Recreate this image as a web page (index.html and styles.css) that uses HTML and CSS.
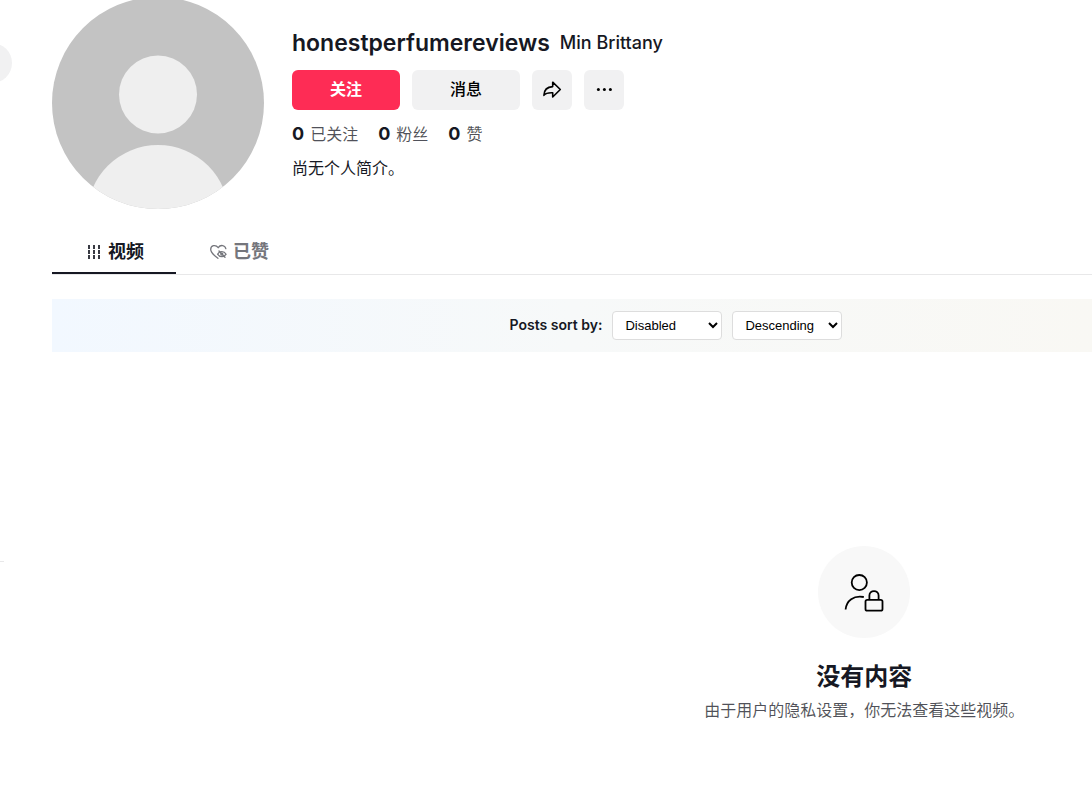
FILE: index.html
```
<!DOCTYPE html>
<html lang="zh-CN">

<head>
    <meta charset="UTF-8">
    <meta name="viewport" content="width=device-width, initial-scale=1.0">
    <title>honestperfumereviews</title>
    <link rel="stylesheet" href="styles.css">
</head>

<body>
    <div class="layout">
        <aside class="sidebar">
            <button class="sidebar-search" type="button" aria-label="搜索"></button>
            <hr class="sidebar-line">
        </aside>

        <main class="profile">
            <header class="profile-header">
                <svg class="avatar" viewBox="0 0 212 212" role="img" aria-label="头像">
                    <defs>
                        <clipPath id="avatarClip"><circle cx="106" cy="106" r="106" /></clipPath>
                    </defs>
                    <g clip-path="url(#avatarClip)">
                        <rect width="212" height="212" fill="#c3c3c3" />
                        <circle cx="106" cy="97.5" r="39" fill="#efefef" />
                        <circle cx="106" cy="219" r="71" fill="#efefef" />
                    </g>
                </svg>

                <div class="info">
                    <div class="names">
                        <h1 class="username">honestperfumereviews</h1>
                        <h2 class="nickname">Min Brittany</h2>
                    </div>
                    <div class="actions">
                        <button class="btn btn-follow" type="button">关注</button>
                        <button class="btn btn-message" type="button">消息</button>
                        <button class="btn btn-icon" type="button" aria-label="分享">
                            <svg width="20" height="20" viewBox="0 0 20 20" fill="none" stroke="#000" stroke-width="1.6" stroke-linejoin="round">
                                <path d="M10.7 2.2 L18.3 9.5 L10.7 17 V12.8 C6.7 12.6 4 12.8 1.9 15.3 C2.1 10 5.3 6.9 10.7 6.6 Z" />
                            </svg>
                        </button>
                        <button class="btn btn-icon" type="button" aria-label="更多">
                            <svg width="20" height="20" viewBox="0 0 20 20" fill="#000">
                                <circle cx="4.4" cy="9.6" r="1.5" />
                                <circle cx="10.4" cy="9.6" r="1.5" />
                                <circle cx="16.4" cy="9.6" r="1.5" />
                            </svg>
                        </button>
                    </div>
                    <div class="stats">
                        <div class="stat"><strong>0</strong><span>已关注</span></div>
                        <div class="stat"><strong>0</strong><span>粉丝</span></div>
                        <div class="stat"><strong>0</strong><span>赞</span></div>
                    </div>
                    <p class="bio">尚无个人简介。</p>
                </div>
            </header>

            <nav class="tabs">
                <a class="tab tab-active" href="#videos">
                    <svg width="16" height="16" viewBox="0 0 16 16" fill="none" stroke="#161823" stroke-width="2" opacity=".85">
                        <path d="M3 1 V5 M3 6 V10 M3 11 V15 M8 1 V5 M8 6 V10 M8 11 V15 M13 1 V5 M13 6 V10 M13 11 V15" />
                    </svg>
                    <span>视频</span>
                </a>
                <a class="tab" href="#liked">
                    <svg width="18" height="16" viewBox="0 0 18 16" fill="none" stroke="#75767c" stroke-width="1.3" stroke-linecap="round" stroke-linejoin="round">
                        <path d="M8.9 14.3 C5 11.5 1.7 8.8 1.7 5.3 C1.7 1.2 6.7 .2 9.2 3.7 C11.5 .3 16.1 1 16.8 4.7" />
                        <path d="M8.6 10.2 C10.5 6.7 15.1 6.7 17.1 10.2 C15.1 13.5 10.6 13.5 8.6 10.2 Z" />
                        <circle cx="12.8" cy="10.1" r="1" />
                        <path d="M10 7 L16 13.3" />
                    </svg>
                    <span>已赞</span>
                </a>
            </nav>

            <form class="sort-bar">
                <label class="sort-label" for="sortBy">Posts sort by:</label>
                <select class="sort-select" id="sortBy">
                    <option>Disabled</option>
                    <option>Views</option>
                    <option>Likes</option>
                </select>
                <select class="sort-select" id="sortOrder" aria-label="Sort order">
                    <option>Descending</option>
                    <option>Ascending</option>
                </select>
            </form>

            <section class="empty">
                <div class="empty-icon">
                    <svg width="44" height="44" viewBox="0 0 44 44" fill="none" stroke="#000" stroke-width="1.8" stroke-linejoin="round">
                        <circle cx="17.3" cy="12.6" r="7.6" />
                        <path d="M3.6 39.5 C4.5 30.5 11.5 25.2 21.8 27" />
                        <rect x="23.5" y="29.8" width="17" height="10.9" rx="1.8" />
                        <path d="M27.4 29.8 V25.6 C27.4 19.6 36.6 19.6 36.6 25.6 V29.8" />
                    </svg>
                </div>
                <h2 class="empty-title">没有内容</h2>
                <p class="empty-text">由于用户的隐私设置，你无法查看这些视频。</p>
            </section>
        </main>
    </div>
</body>

</html>
```
FILE: styles.css
```
* {
    box-sizing: border-box;
}

body {
    margin: 0;
    overflow-x: hidden;
    background: #fff;
    color: #161823;
    font-family: Inter, "Noto Sans CJK SC", sans-serif;
}

h1,
h2,
p {
    margin: 0;
}

.layout {
    display: flex;
}

/* Collapsed sidebar, only its right edge is visible */
.sidebar {
    flex: 0 0 52px;
    padding-top: 43px;
}

.sidebar-search {
    display: block;
    width: 40px;
    height: 40px;
    margin-left: -28px;
    border: none;
    border-radius: 50%;
    background: #f1f1f2;
}

.sidebar-line {
    width: 4px;
    height: 1px;
    margin: 478px 0 0;
    border: none;
    background: #e8e8e9;
}

.profile {
    flex: 1;
    min-width: 0;
}

/* Header */
.profile-header {
    display: flex;
    gap: 28px;
    margin-top: -3px;
}

.avatar {
    flex: none;
    width: 212px;
    height: 212px;
}

.info {
    padding-top: 30px;
}

.names {
    display: flex;
    align-items: center;
    gap: 10px;
    height: 32px;
    margin-bottom: 11px;
}

.username {
    font-size: 23px;
    font-weight: 600;
    line-height: 32px;
}

.nickname {
    font-size: 18px;
    font-weight: 500;
    line-height: 24px;
}

.actions {
    display: flex;
    gap: 12px;
}

.btn {
    display: flex;
    align-items: center;
    justify-content: center;
    width: 108px;
    height: 40px;
    padding: 0;
    border: none;
    border-radius: 6px;
    background: #f1f1f2;
    color: #000;
    font-family: inherit;
    font-size: 16px;
    font-weight: 500;
}

.btn-follow,
.btn-message {
    padding-bottom: 4px;
}

.btn-follow {
    background: #fe2c55;
    color: #fff;
    font-weight: 600;
}

.btn-icon {
    width: 40px;
}

.stats {
    display: flex;
    gap: 20px;
    margin-top: 12px;
}

.stat {
    display: flex;
    gap: 6px;
    font-size: 16px;
    line-height: 24px;
    color: rgba(22, 24, 35, 0.75);
}

.stat strong {
    color: #161823;
    font-size: 18px;
}

.bio {
    margin-top: 10px;
    font-size: 16px;
    line-height: 24px;
}

/* Tabs */
.tabs {
    display: flex;
    margin-top: 22px;
    border-bottom: 1px solid #e8e8e9;
}

.tab {
    display: flex;
    align-items: center;
    justify-content: center;
    gap: 6px;
    width: 124px;
    height: 43px;
    padding-left: 2px;
    border-bottom: 2px solid transparent;
    color: #75767c;
    font-size: 18px;
    font-weight: 600;
    text-decoration: none;
}

.tab span {
    padding-bottom: 3px;
}

.tab-active {
    border-color: #161823;
    color: #161823;
}

/* Sorting */
.sort-bar {
    display: flex;
    align-items: center;
    justify-content: center;
    gap: 10px;
    margin-top: 24px;
    padding: 12px 0 12px 20%;
    background: linear-gradient(90deg, #f2f8ff, #f7f9f9 50%, #f9f8f4);
}

.sort-label {
    padding-bottom: 2px;
    font-size: 14px;
    font-weight: 600;
}

.sort-select {
    width: 110px;
    height: 29px;
    padding: 0 8px;
    border: 1px solid #ddd;
    border-radius: 4px;
    background: #fff;
    color: #000;
    font-family: "Liberation Sans", sans-serif;
    font-size: 13px;
}

/* Empty state */
.empty {
    display: flex;
    flex-direction: column;
    align-items: center;
    padding: 194px 0 80px calc(56% + 2px);
}

.empty-icon {
    display: flex;
    align-items: center;
    justify-content: center;
    width: 92px;
    height: 92px;
    border-radius: 50%;
    background: #f8f8f8;
}

.empty-title {
    margin-top: 23px;
    font-size: 24px;
    font-weight: 600;
    line-height: 32px;
}

.empty-text {
    margin-top: 5px;
    color: rgba(22, 24, 35, 0.75);
    font-size: 16px;
    line-height: 24px;
    white-space: nowrap;
}
```
